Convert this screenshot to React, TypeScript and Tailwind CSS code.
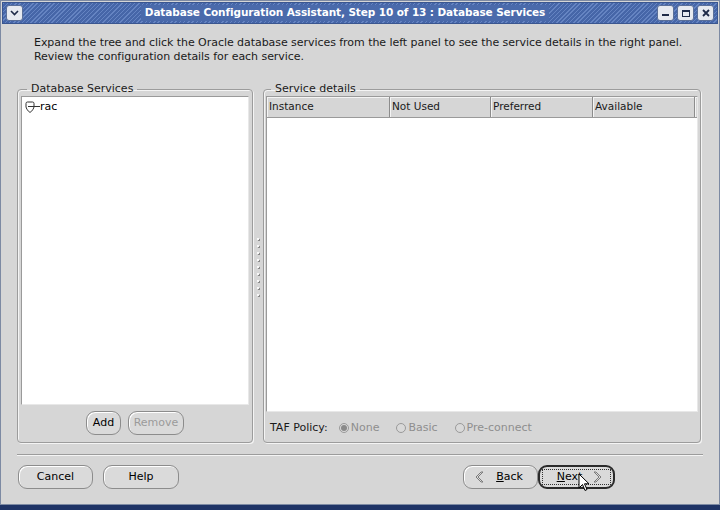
import React from 'react';

const font = { fontFamily: '"DejaVu Sans", Verdana, sans-serif' };

function Radio({ label, checked }: { label: string; checked?: boolean }) {
  return (
    <div className="flex items-center gap-[2px] text-[#8e8e8e]">
      <span className="w-[10px] h-[10px] rounded-full border border-[#9a9a9a] bg-[#d9d9d9] flex items-center justify-center">
        {checked && <span className="w-[6px] h-[6px] rounded-full bg-[#8a8a8a]" />}
      </span>
      <span>{label}</span>
    </div>
  );
}

function Btn({ children, w, focus, disabled }: { children: React.ReactNode; w: string; focus?: boolean; disabled?: boolean }) {
  return (
    <div
      className={`${w} h-[24px] rounded-[9px] flex items-center justify-center text-[11px] relative ${
        focus ? 'border-[2px] border-[#2a2a2a]' : 'border border-[#8c8c8c] shadow-[inset_1px_1px_0_#ffffff]'
      } ${disabled ? 'text-[#9a9a9a]' : 'text-black'} bg-[#dadada]`}
    >
      {focus && <span className="absolute inset-[2px] border border-dotted border-[#333]" />}
      {children}
    </div>
  );
}

function Chevron({ dir }: { dir: 'left' | 'right' }) {
  const d = dir === 'left' ? 'M7 1 L2 6 L7 11 L9 11 L4 6 L9 1 Z' : 'M3 1 L8 6 L3 11 L1 11 L6 6 L1 1 Z';
  return (
    <svg width="10" height="12" viewBox="0 0 10 12">
      <path d={d} fill="none" stroke="#7a7a7a" strokeWidth="1" />
    </svg>
  );
}

export default function App() {
  return (
    <div className="w-[720px] h-[510px] bg-[#1f3466] overflow-hidden relative" style={font}>
      <div className="w-[720px] h-[505px] bg-[#d6d6d6] border border-[#7d8aa3] flex flex-col">
        {/* title bar */}
        <div className="h-[22px] mx-[1px] mt-[1px] flex items-center px-[3px] border border-[#3a5690] bg-[repeating-linear-gradient(135deg,#6584c2_0px,#6584c2_1px,#4666a8_1px,#4666a8_3px)]">
          <div className="w-[17px] h-[16px] rounded-[3px] border border-[#5a6f99] bg-[#e6e9f0] flex items-center justify-center">
            <svg width="9" height="6" viewBox="0 0 9 6"><path d="M1 1 L4.5 4.5 L8 1" fill="none" stroke="#1e2a48" strokeWidth="1.6" /></svg>
          </div>
          <div className="flex-1 flex justify-center pl-[10px]">
            <span className="bg-[#4a6aab] px-[4px] text-white font-bold text-[10.5px] tracking-[-0.1px]">
              Database Configuration Assistant, Step 10 of 13 : Database Services
            </span>
          </div>
          <div className="flex gap-[3px]">
            {['min', 'max', 'close'].map((k) => (
              <div key={k} className="w-[17px] h-[16px] rounded-[3px] border border-[#5a6f99] bg-[#e6e9f0] flex items-center justify-center">
                {k === 'min' && <span className="w-[7px] h-[2px] bg-[#1e2a48] mt-[4px]" />}
                {k === 'max' && <span className="w-[8px] h-[7px] border border-[#1e2a48] border-t-2" />}
                {k === 'close' && (
                  <svg width="8" height="8" viewBox="0 0 8 8"><path d="M1 1 L7 7 M7 1 L1 7" stroke="#1e2a48" strokeWidth="1.8" /></svg>
                )}
              </div>
            ))}
          </div>
        </div>

        {/* instructions */}
        <div className="pl-[33px] pt-[12px] text-[11px] leading-[14px] tracking-[-0.05px] text-[#1a1a1a]">
          <div>Expand the tree and click the Oracle database services from the left panel to see the service details in the right panel.</div>
          <div>Review the configuration details for each service.</div>
        </div>

        {/* groups */}
        <div className="flex mt-[18px] pl-[16px] h-[361px]">
          <fieldset className="w-[236px] border border-[#9c9c9c] rounded-[4px] shadow-[1px_1px_0_#f4f4f4,inset_1px_1px_0_#f4f4f4] px-[3px] pb-[7px] flex flex-col">
            <legend className="ml-[6px] px-[4px] text-[11px] leading-[14px] text-[#1a1a1a]">Database Services</legend>
            <div className="h-[311px] bg-white border border-[#9a9a9a] border-b-[#e8e8e8] border-r-[#e8e8e8] pl-[3px] pt-[3px]">
              <div className="flex items-center text-[11px] leading-[14px]">
                <svg width="15" height="13" viewBox="0 0 15 13">
                  <path d="M1 2.5 Q1 1 2.5 1 L7.5 1 Q9 1 9 2.5 L9 6 Q9 8.5 5 11.5 Q1 8.5 1 6 Z" fill="none" stroke="#333" strokeWidth="1" />
                  <path d="M3 5.5 L15 5.5" stroke="#333" strokeWidth="1" />
                </svg>
                <span>rac</span>
              </div>
            </div>
            <div className="flex justify-center gap-[7px] mt-[6px]">
              <Btn w="w-[35px]">Add</Btn>
              <Btn w="w-[56px]" disabled>Remove</Btn>
            </div>
          </fieldset>

          {/* splitter */}
          <div className="w-[10px] flex flex-col items-center justify-center gap-[5px] pt-[8px]">
            {Array.from({ length: 9 }).map((_, i) => (
              <span key={i} className="w-[2px] h-[2px] bg-[#f8f8f8] shadow-[1px_1px_0_#8a8a8a]" />
            ))}
          </div>

          <fieldset className="w-[438px] border border-[#9c9c9c] rounded-[4px] shadow-[1px_1px_0_#f4f4f4,inset_1px_1px_0_#f4f4f4] px-[2px] pb-[6px] flex flex-col">
            <legend className="ml-[5px] px-[4px] text-[11px] leading-[14px] text-[#1a1a1a]">Service details</legend>
            <div className="h-[316px] bg-white border border-[#9a9a9a] border-b-[#e8e8e8] border-r-[#e8e8e8] flex flex-col">
              <div className="h-[21px] flex text-[10.5px] bg-[#d6d6d6] border-b border-[#9a9a9a]">
                {[
                  ['Instance', 'w-[123px]'],
                  ['Not Used', 'w-[101px]'],
                  ['Preferred', 'w-[102px]'],
                  ['Available', 'w-[102px]'],
                ].map(([t, w]) => (
                  <div key={t} className={`${w} flex items-center pl-[2px] border-r border-[#8c8c8c] shadow-[inset_1px_1px_0_#f4f4f4] text-[#1a1a1a]`}>
                    {t}
                  </div>
                ))}
                <div className="flex-1 shadow-[inset_1px_1px_0_#f4f4f4]" />
              </div>
              <div className="flex-1" />
            </div>
            <div className="flex items-center gap-[11px] mt-[9px] pl-[4px] text-[11px] leading-[14px]">
              <span className="text-[#1a1a1a]">TAF Policy:</span>
              <div className="flex gap-[17px]">
                <Radio label="None" checked />
                <Radio label="Basic" />
                <Radio label="Pre-connect" />
              </div>
            </div>
          </fieldset>
        </div>

        {/* separator */}
        <div className="mx-[16px] mt-[11px] h-[2px] border-t border-[#9c9c9c] border-b border-b-[#f4f4f4]" />

        {/* bottom buttons */}
        <div className="flex items-center mt-[9px] pl-[17px] pr-[104px]">
          <Btn w="w-[75px]">Cancel</Btn>
          <div className="w-[10px]" />
          <Btn w="w-[76px]">Help</Btn>
          <div className="flex-1" />
          <Btn w="w-[75px]">
            <span className="absolute left-[10px] top-[5px]"><Chevron dir="left" /></span>
            <span className="ml-[18px]"><u>B</u>ack</span>
          </Btn>
          <Btn w="w-[77px]" focus>
            <span className="mr-[14px]"><u>N</u>ext</span>
            <span className="absolute right-[10px] top-[4px]"><Chevron dir="right" /></span>
            <svg className="absolute left-[38px] top-[6px]" width="12" height="19" viewBox="0 0 12 19">
              <path d="M1 1 L1 15 L4.5 11.5 L7 17.5 L9 16.5 L6.5 10.8 L11 10.8 Z" fill="#fff" stroke="#000" strokeWidth="1" />
            </svg>
          </Btn>
        </div>
      </div>
    </div>
  );
}
